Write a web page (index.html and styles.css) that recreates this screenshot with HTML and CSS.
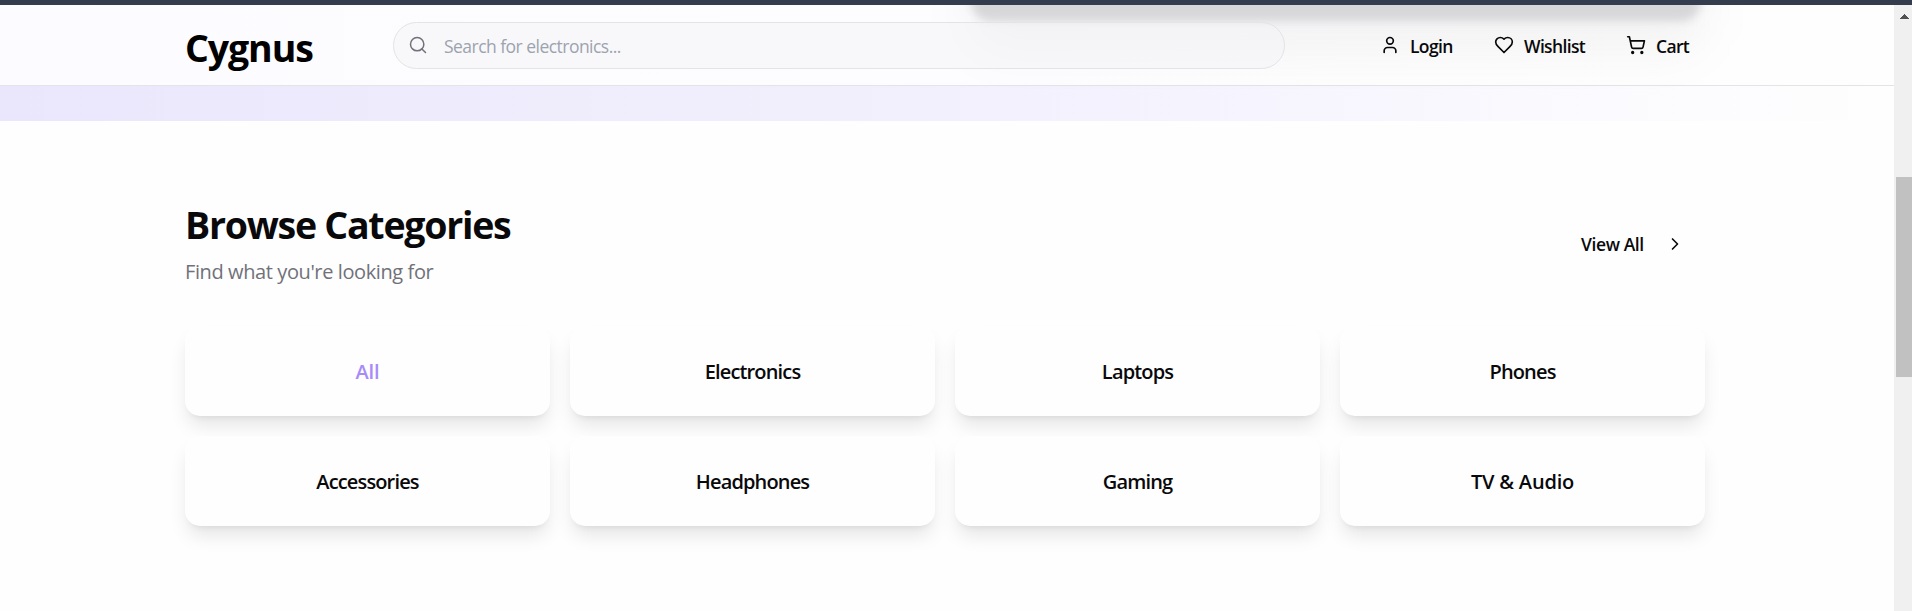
FILE: index.html
```html
<!DOCTYPE html>
<html lang="en">
<head>
<meta charset="utf-8">
<title>Cygnus</title>
<link rel="stylesheet" href="styles.css">
</head>
<body>
<div class="chrome-edge"></div>
<div class="window">
  <div class="page">
    <header class="header">
      <div class="header-glow"><div class="glow-soft"></div><div class="glow-strong"></div></div>
      <div class="container header-row">
        <a class="logo">Cygnus</a>
        <div class="search">
          <svg class="icon" viewBox="0 0 24 24"><circle cx="11" cy="11" r="8"/><path d="m21 21-4.3-4.3"/></svg>
          <span class="placeholder">Search for electronics...</span>
        </div>
        <nav class="nav">
          <a class="nav-item login"><svg class="icon" viewBox="0 0 24 24"><path d="M19 21v-2a4 4 0 0 0-4-4H9a4 4 0 0 0-4 4v2"/><circle cx="12" cy="7" r="4"/></svg><span>Login</span></a>
          <a class="nav-item wishlist"><svg class="icon" viewBox="0 0 24 24"><path d="M19 14c1.49-1.46 3-3.21 3-5.5A5.5 5.5 0 0 0 16.5 3c-1.76 0-3 .5-4.5 2-1.5-1.5-2.74-2-4.5-2A5.5 5.5 0 0 0 2 8.5c0 2.3 1.5 4.05 3 5.5l7 7Z"/></svg><span>Wishlist</span></a>
          <a class="nav-item cart"><svg class="icon" viewBox="0 0 24 24"><circle cx="8" cy="21" r="1"/><circle cx="19" cy="21" r="1"/><path d="M2.05 2.05h2l2.66 12.42a2 2 0 0 0 2 1.58h9.78a2 2 0 0 0 1.95-1.57l1.65-7.43H5.12"/></svg><span>Cart</span></a>
        </nav>
      </div>
    </header>
    <div class="hero-tail"></div>
    <main class="container categories">
      <div class="section-head">
        <div>
          <h2 class="title">Browse Categories</h2>
          <p class="subtitle">Find what you're looking for</p>
        </div>
        <a class="view-all"><span>View All</span><svg class="icon" viewBox="0 0 24 24"><path d="m9 18 6-6-6-6"/></svg></a>
      </div>
      <div class="grid">
        <a class="card active">All</a>
        <a class="card">Electronics</a>
        <a class="card">Laptops</a>
        <a class="card">Phones</a>
        <a class="card">Accessories</a>
        <a class="card">Headphones</a>
        <a class="card">Gaming</a>
        <a class="card wide">TV &amp; Audio</a>
      </div>
    </main>
  </div>
  <div class="scrollbar">
    <svg class="scroll-up" viewBox="0 0 9 5" shape-rendering="crispEdges"><path d="M4 0h1v1h1v1h1v1h1v1h1v1H0V4h1V3h1V2h1V1h1z"/></svg>
    <div class="thumb"></div>
  </div>
</div>
</body>
</html>
```
FILE: styles.css
```css
* { box-sizing: border-box; }

body {
  margin: 0;
  height: 611px;
  overflow: hidden;
  font-family: "Open Sans", "Noto Sans", sans-serif;
  color: #09090b;
  background: #fefefe;
}

.chrome-edge { height: 5px; background: #343d4e; }
.window { display: flex; height: 606px; }
.page { flex: 1; min-width: 0; overflow: hidden; }
.container { width: 1520px; margin-left: 185px; }

.icon {
  width: 20px;
  height: 20px;
  flex: none;
  fill: none;
  stroke: currentColor;
  stroke-width: 2;
  stroke-linecap: round;
  stroke-linejoin: round;
}

.header {
  position: relative;
  height: 81px;
  border-bottom: 1px solid #e4e4e7;
  background: linear-gradient(90deg, #fcfbff, #fdfdff 50%, #fefefe);
}
.header-glow { position: absolute; inset: 0 0 -36px; overflow: hidden; z-index: 1; }
.glow-soft {
  position: absolute;
  left: 970px;
  top: -60px;
  width: 735px;
  height: 106px;
  border-radius: 30px;
  background: rgba(0, 0, 0, .042);
  filter: blur(24px);
}
.glow-strong {
  position: absolute;
  left: 971px;
  top: -40px;
  width: 730px;
  height: 56px;
  border-radius: 20px;
  background: #d7d7da;
  filter: blur(4px);
}
.header-row { position: relative; z-index: 2; display: flex; height: 80px; }

.logo {
  width: 208px;
  padding-top: 18px;
  font-size: 37.5px;
  line-height: 50px;
  font-weight: 700;
  letter-spacing: -1.1px;
  color: #000;
}

.search {
  display: flex;
  align-items: center;
  width: 892px;
  height: 47px;
  margin-top: 17px;
  padding-left: 14px;
  gap: 16px;
  border: 1px solid #e4e4e7;
  border-radius: 24px;
  background: rgba(244, 244, 245, .5);
  color: #71717a;
}
.search .icon { margin-bottom: 1px; stroke-width: 1.8; }
.placeholder { color: #9ca3af; font-size: 17.5px; letter-spacing: -.53px; }

.nav { display: flex; align-items: flex-start; padding: 27px 0 0 95px; font-size: 17.5px; font-weight: 600; line-height: 28px; }
.nav-item { display: flex; gap: 10px; }
.nav-item .icon { margin-top: 3px; }
.login { width: 114px; }
.wishlist { width: 132px; }
.nav-item span { letter-spacing: -.65px; white-space: nowrap; }

.hero-tail { height: 35px; background: linear-gradient(90deg, #eae7fd, #f0edfc 35%, #f5f3fe 63%, #faf9fe 80%, #fefefe); }

.categories { padding-top: 79px; }
.section-head { display: flex; justify-content: space-between; height: 126px; }
.title { margin: 0; font-size: 37.5px; line-height: 50px; letter-spacing: -1.25px; font-weight: 700; }
.subtitle { margin: 7px 0 0; font-size: 20px; line-height: 30px; letter-spacing: -.4px; color: #71717a; }
.view-all { display: flex; width: 124px; justify-content: space-between; padding: 30px 0 0; height: 60px; font-size: 17.5px; line-height: 28px; font-weight: 600; letter-spacing: -.4px; }
.view-all .icon { margin: 4px 20px 0 0; }

.grid { display: grid; grid-template-columns: repeat(4, 365px); grid-auto-rows: 90px; gap: 20px; }
.card {
  display: flex;
  align-items: center;
  justify-content: center;
  border-radius: 15px;
  background: #fefefe;
  box-shadow: 0 12.5px 18.75px -3.75px rgba(0, 0, 0, .1), 0 5px 7.5px -5px rgba(0, 0, 0, .1);
  font-size: 20px;
  font-weight: 600;
  letter-spacing: -.85px;
}
.wide { letter-spacing: -.2px; }
.active { color: #a78bfa; letter-spacing: -.1px; }

.scrollbar { width: 18px; padding: 9px 0 0 2px; background: #f0f0f0; }
.scroll-up { display: block; width: 9px; height: 5px; margin-left: 4px; fill: #505050; }
.thumb { width: 16px; height: 200px; margin-top: 158px; background: #c1c1c1; }
```
